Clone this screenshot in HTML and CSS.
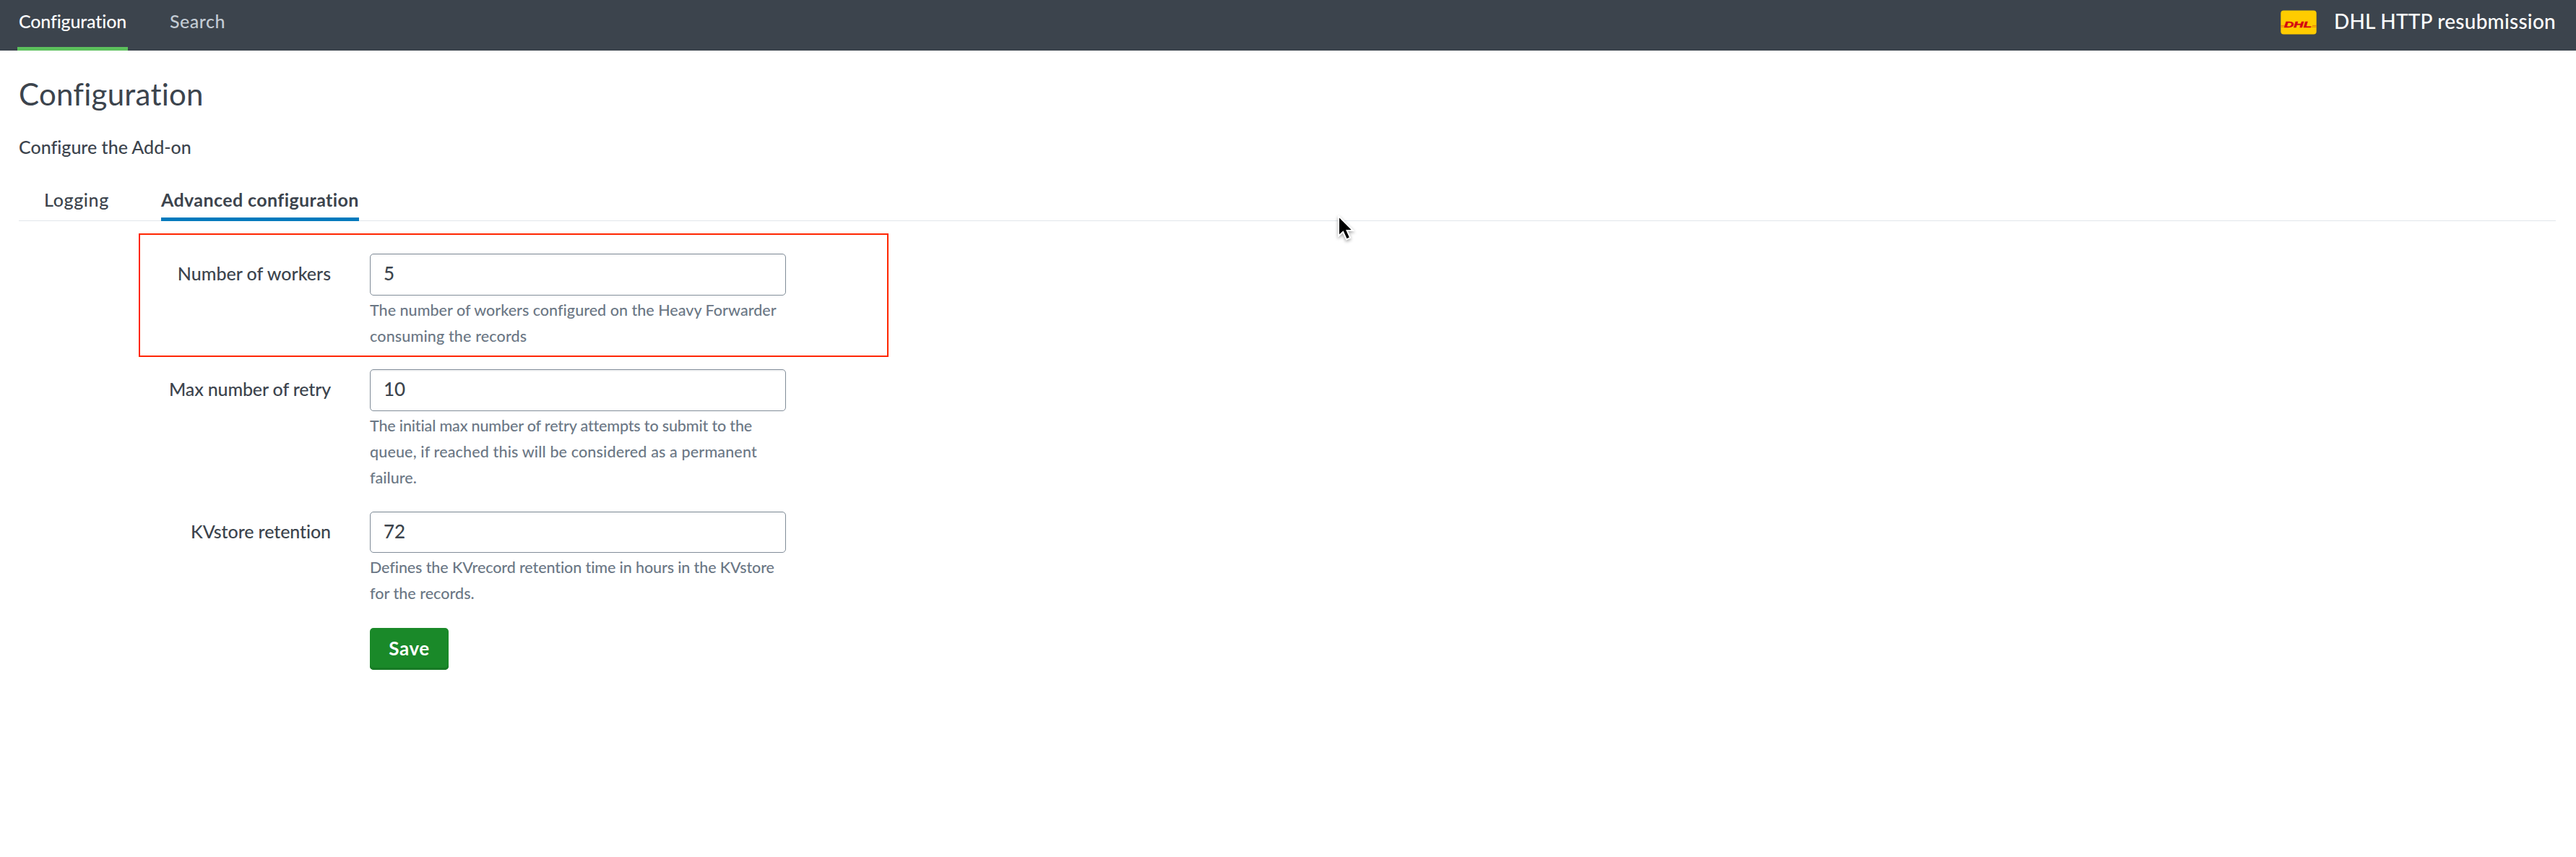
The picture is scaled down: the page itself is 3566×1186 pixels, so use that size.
FILE: index.html
```
<!DOCTYPE html>
<html lang="en">
<head>
<meta charset="utf-8">
<title>Configuration</title>
<link rel="stylesheet" href="styles.css">
</head>
<body>
<header class="appbar">
  <nav class="appnav">
    <a class="appnav-item active">Configuration</a>
    <a class="appnav-item">Search</a>
  </nav>
  <div class="brand">
    <svg class="brand-logo" viewBox="0 0 50 34" width="50" height="34">
      <rect x="0.3" y="0.5" width="49.4" height="33" rx="4" fill="#ffcc00"/>
      <path d="M0 21.4h7M0 23.2h6M44 21.4h6M43 23.2h7" stroke="#e0700a" stroke-width="0.8"/>
      <text x="5" y="23.6" textLength="38" lengthAdjust="spacingAndGlyphs" class="brand-mark">DHL</text>
    </svg>
    <span class="brand-name">DHL HTTP resubmission</span>
  </div>
</header>
<main class="page">
  <h1 class="title">Configuration</h1>
  <p class="subtitle">Configure the Add-on</p>
  <div class="tabs">
    <a class="tab">Logging</a>
    <a class="tab active">Advanced configuration</a>
  </div>
  <form class="form">
    <div class="field workers highlighted">
      <label class="label">Number of workers</label>
      <div class="control">
        <div class="input">5</div>
        <p class="help">The number of workers configured on the Heavy Forwarder<br><span class="loose">consuming the records</span></p>
      </div>
    </div>
    <div class="field retry">
      <label class="label">Max number of retry</label>
      <div class="control">
        <div class="input">10</div>
        <p class="help"><span class="tight">The initial max number of retry attempts to submit to the</span><br><span class="loose">queue, if reached this will be considered as a permanent</span><br>failure.</p>
      </div>
    </div>
    <div class="field retention">
      <label class="label">KVstore retention</label>
      <div class="control">
        <div class="input">72</div>
        <p class="help"><span class="snug">Defines the KVrecord retention time in hours in the KVstore</span><br>for the records.</p>
      </div>
    </div>
    <button type="button" class="save">Save</button>
  </form>
</main>
<svg class="cursor" viewBox="0 0 26 36" width="26" height="36">
  <path d="M2 1V28.5L8.2 23L13 33.5L18.2 31L13.6 21H22Z" fill="#000" stroke="#fff" stroke-width="2"/>
</svg>
</body>
</html>
```
FILE: styles.css
```
*, *::after { box-sizing: border-box; }
body { margin: 0; background: #fff; color: #3c444d; font-family: Lato, sans-serif; font-size: 25px; font-weight: 500; line-height: 40px; font-variant-ligatures: none; }
h1, p { margin: 0; font-weight: 500; }

.appbar { display: flex; justify-content: space-between; height: 70px; padding: 0 28px 0 24px; background: #3c444d; }
.appnav { display: flex; gap: 56px; }
.appnav-item { height: 70px; padding: 9px 2px 0; color: #c3cbd4; letter-spacing: 0.5px; }
.appnav-item.active { color: #fff; border-bottom: 5px solid #5cc05c; letter-spacing: -0.15px; }
.brand { display: flex; align-items: flex-start; gap: 24px; color: #fff; }
.brand-logo { margin-top: 14px; }
.brand-mark { font: italic 900 11px "Liberation Sans", sans-serif; fill: #d40511; stroke: #d40511; stroke-width: 0.5px; }
.brand-name { font-size: 28px; padding-top: 9px; letter-spacing: 0.24px; }

.page { padding: 30px 28px 0 26px; }
.title { font-size: 42px; line-height: 60px; font-weight: 400; letter-spacing: 0.25px; }
.subtitle { margin-top: 23px; }

.tabs { display: flex; gap: 72px; margin-top: 33px; padding-left: 35px; height: 50px; border-bottom: 1px solid #e1e6eb; }
.tab { height: 50px; letter-spacing: 0.65px; }
.tab.active { font-weight: 700; border-bottom: 5px solid #007abd; letter-spacing: 0.41px; }

.form { padding-top: 45px; }
.field { display: flex; gap: 54px; position: relative; }
.workers { margin-bottom: 28px; }
.retry { margin-bottom: 29px; }
.retention { margin-bottom: 30px; }
.retry .label { letter-spacing: -0.15px; }
.retention .label { letter-spacing: -0.09px; }
.label { width: 432px; text-align: right; padding-top: 7px; }
.control { width: 576px; }
.input { height: 58px; padding: 6px 18px; border: 1px solid #818d99; border-radius: 5px; box-shadow: inset 0 2px 2px #f2f3f4; font-size: 26px; }
.retention .input { height: 57px; }
.help { font-size: 21.5px; line-height: 36px; color: #6b7785; padding-top: 2px; white-space: nowrap; letter-spacing: 0.03px; }
.loose { letter-spacing: 0.15px; }
.snug { letter-spacing: -0.1px; }
.tight { letter-spacing: -0.15px; }
.highlighted::after { content: ""; position: absolute; left: 166px; top: -28px; width: 1038px; height: 171px; border: 2px solid #ff2600; }

.save { display: block; margin-left: 486px; width: 109px; height: 58px; padding: 0 0 2px; border: 0; border-radius: 5px; background: #1a8929; box-shadow: inset 0 -3px 0 #177a25; color: #fff; font: 700 26px/40px Lato, sans-serif; letter-spacing: 0.6px; }
.cursor { position: absolute; left: 1851px; top: 298px; filter: drop-shadow(0 2px 2px rgba(0,0,0,.35)); }
```
